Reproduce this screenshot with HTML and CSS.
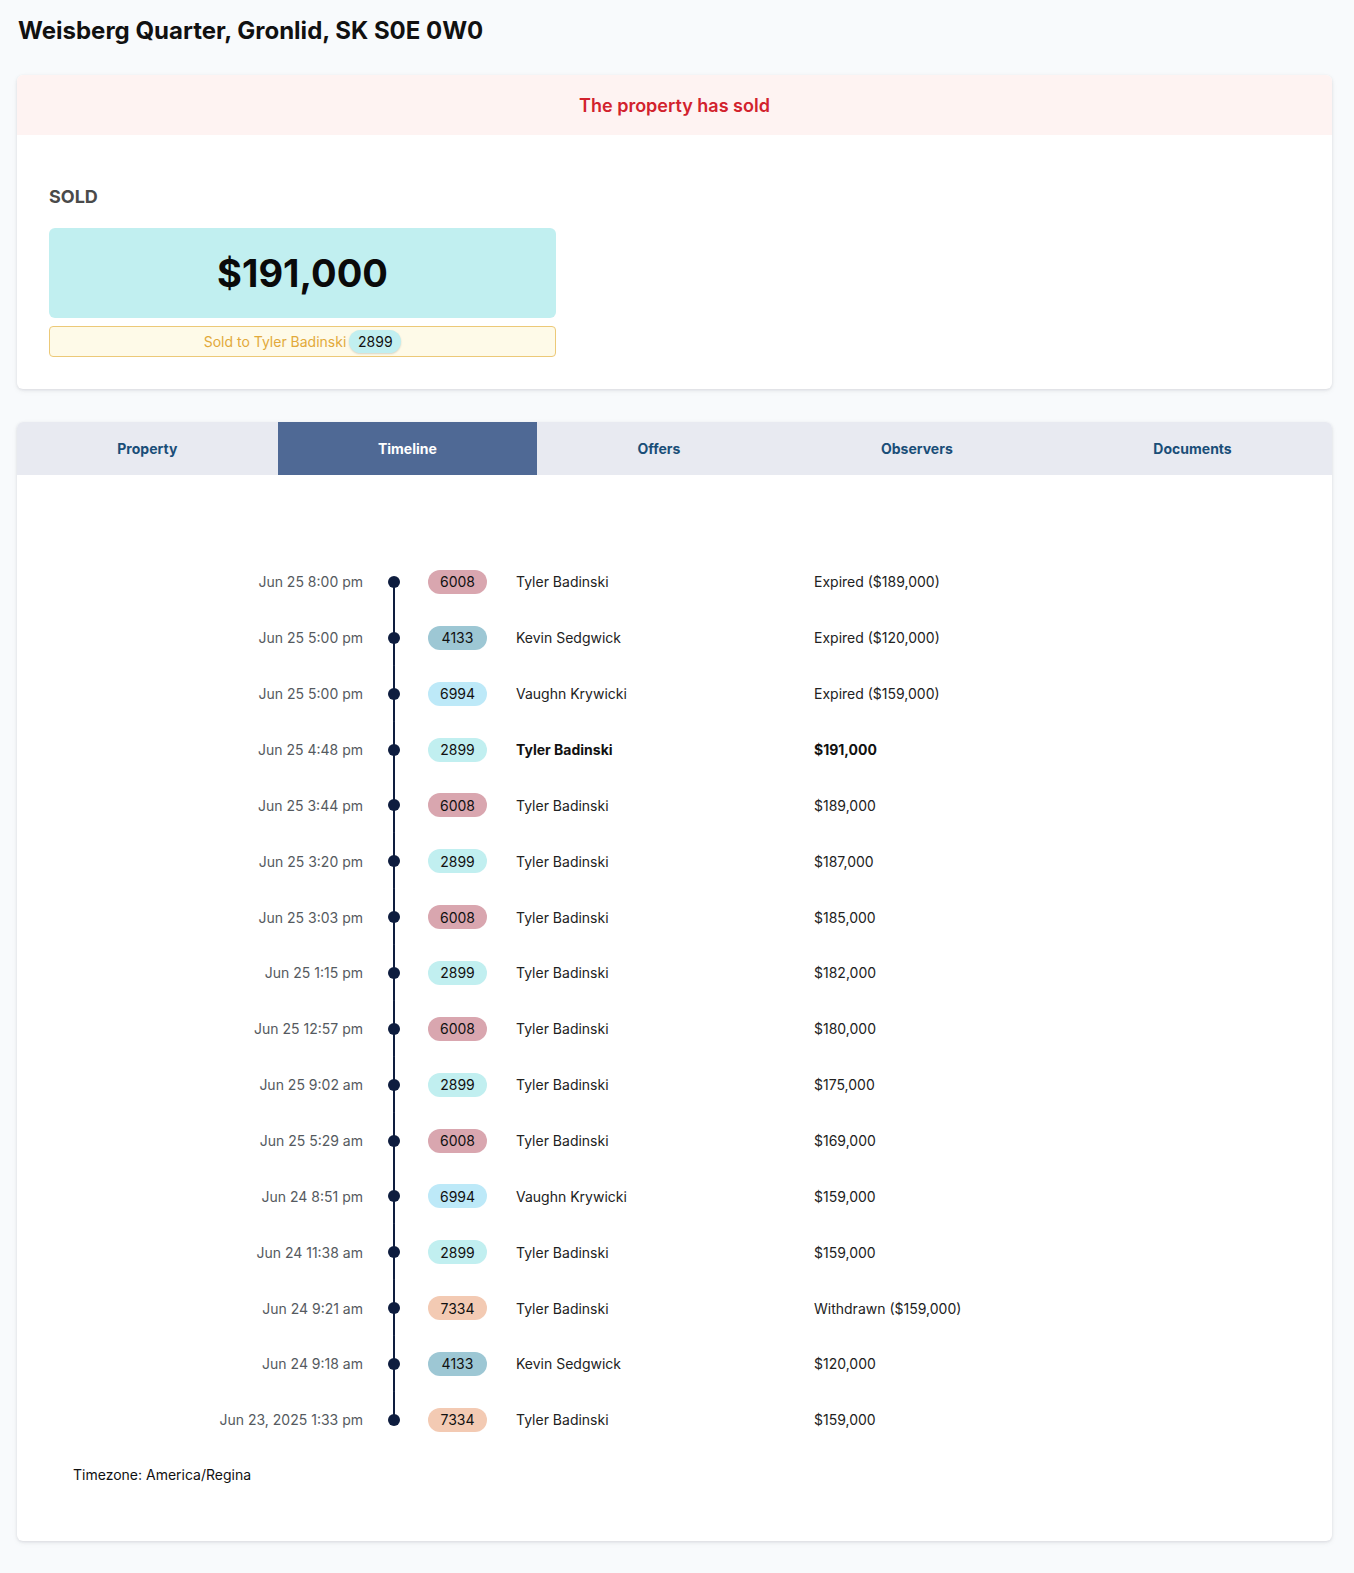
FILE: index.html
```html
<!DOCTYPE html>
<html lang="en">
<head>
<meta charset="utf-8">
<title>Weisberg Quarter</title>
<link rel="stylesheet" href="styles.css">
</head>
<body>
<div class="page">
  <h1 class="title">Weisberg Quarter, Gronlid, SK S0E 0W0</h1>

  <section class="card">
    <div class="banner">The property has sold</div>
    <div class="sold-body">
      <div class="sold-label">SOLD</div>
      <div class="price-box">$191,000</div>
      <div class="sold-to">Sold to Tyler Badinski <span class="pill p-2899 pill-inline">2899</span></div>
    </div>
  </section>

  <section class="card card-tabs">
    <nav class="tabs">
      <div class="tab">Property</div>
      <div class="tab active">Timeline</div>
      <div class="tab">Offers</div>
      <div class="tab">Observers</div>
      <div class="tab">Documents</div>
    </nav>
    <div class="timeline">
      <div class="row first"><div class="date">Jun 25 8:00 pm</div><div class="rail"><span class="dot"></span></div><div class="bcell"><span class="pill p-6008">6008</span></div><div class="name">Tyler Badinski</div><div class="val">Expired ($189,000)</div></div>
      <div class="row"><div class="date">Jun 25 5:00 pm</div><div class="rail"><span class="dot"></span></div><div class="bcell"><span class="pill p-4133">4133</span></div><div class="name">Kevin Sedgwick</div><div class="val">Expired ($120,000)</div></div>
      <div class="row"><div class="date">Jun 25 5:00 pm</div><div class="rail"><span class="dot"></span></div><div class="bcell"><span class="pill p-6994">6994</span></div><div class="name">Vaughn Krywicki</div><div class="val">Expired ($159,000)</div></div>
      <div class="row win"><div class="date">Jun 25 4:48 pm</div><div class="rail"><span class="dot"></span></div><div class="bcell"><span class="pill p-2899">2899</span></div><div class="name">Tyler Badinski</div><div class="val">$191,000</div></div>
      <div class="row"><div class="date">Jun 25 3:44 pm</div><div class="rail"><span class="dot"></span></div><div class="bcell"><span class="pill p-6008">6008</span></div><div class="name">Tyler Badinski</div><div class="val">$189,000</div></div>
      <div class="row"><div class="date">Jun 25 3:20 pm</div><div class="rail"><span class="dot"></span></div><div class="bcell"><span class="pill p-2899">2899</span></div><div class="name">Tyler Badinski</div><div class="val">$187,000</div></div>
      <div class="row"><div class="date">Jun 25 3:03 pm</div><div class="rail"><span class="dot"></span></div><div class="bcell"><span class="pill p-6008">6008</span></div><div class="name">Tyler Badinski</div><div class="val">$185,000</div></div>
      <div class="row"><div class="date">Jun 25 1:15 pm</div><div class="rail"><span class="dot"></span></div><div class="bcell"><span class="pill p-2899">2899</span></div><div class="name">Tyler Badinski</div><div class="val">$182,000</div></div>
      <div class="row"><div class="date">Jun 25 12:57 pm</div><div class="rail"><span class="dot"></span></div><div class="bcell"><span class="pill p-6008">6008</span></div><div class="name">Tyler Badinski</div><div class="val">$180,000</div></div>
      <div class="row"><div class="date">Jun 25 9:02 am</div><div class="rail"><span class="dot"></span></div><div class="bcell"><span class="pill p-2899">2899</span></div><div class="name">Tyler Badinski</div><div class="val">$175,000</div></div>
      <div class="row"><div class="date">Jun 25 5:29 am</div><div class="rail"><span class="dot"></span></div><div class="bcell"><span class="pill p-6008">6008</span></div><div class="name">Tyler Badinski</div><div class="val">$169,000</div></div>
      <div class="row"><div class="date">Jun 24 8:51 pm</div><div class="rail"><span class="dot"></span></div><div class="bcell"><span class="pill p-6994">6994</span></div><div class="name">Vaughn Krywicki</div><div class="val">$159,000</div></div>
      <div class="row"><div class="date">Jun 24 11:38 am</div><div class="rail"><span class="dot"></span></div><div class="bcell"><span class="pill p-2899">2899</span></div><div class="name">Tyler Badinski</div><div class="val">$159,000</div></div>
      <div class="row"><div class="date">Jun 24 9:21 am</div><div class="rail"><span class="dot"></span></div><div class="bcell"><span class="pill p-7334">7334</span></div><div class="name">Tyler Badinski</div><div class="val">Withdrawn ($159,000)</div></div>
      <div class="row"><div class="date">Jun 24 9:18 am</div><div class="rail"><span class="dot"></span></div><div class="bcell"><span class="pill p-4133">4133</span></div><div class="name">Kevin Sedgwick</div><div class="val">$120,000</div></div>
      <div class="row last"><div class="date">Jun 23, 2025 1:33 pm</div><div class="rail"><span class="dot"></span></div><div class="bcell"><span class="pill p-7334">7334</span></div><div class="name">Tyler Badinski</div><div class="val">$159,000</div></div>
    </div>
    <div class="tz">Timezone: America/Regina</div>
  </section>
</div>
</body>
</html>
```
FILE: styles.css
```css
* { box-sizing: border-box; }
html, body { margin: 0; padding: 0; }
body {
  background: #f8fafc;
  font-family: Inter, "Noto Sans", "Liberation Sans", sans-serif;
  color: #1f2328;
}
.page {
  padding: 15px 22px 31px 17px;
}
.title {
  margin: 0 0 0 1px;
  font-size: 24px;
  line-height: 32px;
  font-weight: 700;
  color: #111111;
}
.card {
  margin-top: 28px;
  background: #ffffff;
  border-radius: 6px;
  box-shadow: 0 1px 3px rgba(15, 23, 42, 0.10), 0 2px 6px rgba(15, 23, 42, 0.05);
  overflow: hidden;
}
.banner {
  height: 60px;
  display: flex;
  align-items: center;
  justify-content: center;
  background: #fef3f2;
  color: #d2222d;
  font-size: 18px;
  font-weight: 600;
}
.sold-body {
  padding: 50px 32px 32px 32px;
  width: 571px;
}
.sold-label {
  font-size: 18px;
  line-height: 24px;
  font-weight: 700;
  color: #4a4a4a;
}
.price-box {
  margin-top: 19px;
  height: 90px;
  background: #c1eff0;
  border-radius: 6px;
  display: flex;
  align-items: center;
  justify-content: center;
  font-size: 38px;
  font-weight: 700;
  color: #0a0a0a;
}
.sold-to {
  margin-top: 8px;
  height: 31px;
  background: #fefae8;
  border: 1px solid #ecc978;
  border-radius: 4px;
  display: flex;
  align-items: center;
  justify-content: center;
  gap: 3px;
  font-size: 14px;
  color: #e2a93a;
}
.card-tabs {
  margin-top: 33px;
}
.tabs {
  display: flex;
  height: 53px;
  background: #e8eaf1;
}
.tab {
  flex: 1 1 auto;
  display: flex;
  align-items: center;
  justify-content: center;
  font-size: 14px;
  font-weight: 700;
  color: #1a4e78;
}
.tab.active {
  background: #4f6995;
  color: #ffffff;
}
.timeline {
  padding-top: 79px;
}
.row {
  display: grid;
  grid-template-columns: 346px 62px 91px 298px 1fr;
  height: 55.87px;
  align-items: center;
  font-size: 14px;
  color: #222222;
}
.date {
  text-align: right;
  color: #555a60;
}
.rail {
  height: 100%;
  display: flex;
  align-items: center;
  justify-content: center;
  background: linear-gradient(#0e1d3f, #0e1d3f) center / 2px 100% no-repeat;
}
.row.first .rail { background-position: center bottom; background-size: 2px 50%; }
.row.last .rail { background-position: center top; background-size: 2px 50%; }
.dot {
  width: 12px;
  height: 12px;
  border-radius: 50%;
  background: #0e1d3f;
}
.bcell {
  padding-left: 3px;
  display: flex;
}
.pill {
  display: inline-flex;
  align-items: center;
  justify-content: center;
  width: 59px;
  height: 24px;
  border-radius: 12px;
  font-size: 14px;
  color: #111111;
}
.pill-inline {
  width: 52px;
  height: 23px;
  box-shadow: 0 1px 2px rgba(0,0,0,0.15);
}
.p-6008 { background: #d9a6af; }
.p-4133 { background: #9dc7d4; }
.p-6994 { background: #bde9f8; }
.p-2899 { background: #c1eff0; }
.p-7334 { background: #f3cab3; }
.row.win .name, .row.win .val { font-weight: 700; color: #111111; }
.tz {
  padding: 17px 0 56px 56px;
  font-size: 14px;
  line-height: 20px;
  color: #111111;
}
```
